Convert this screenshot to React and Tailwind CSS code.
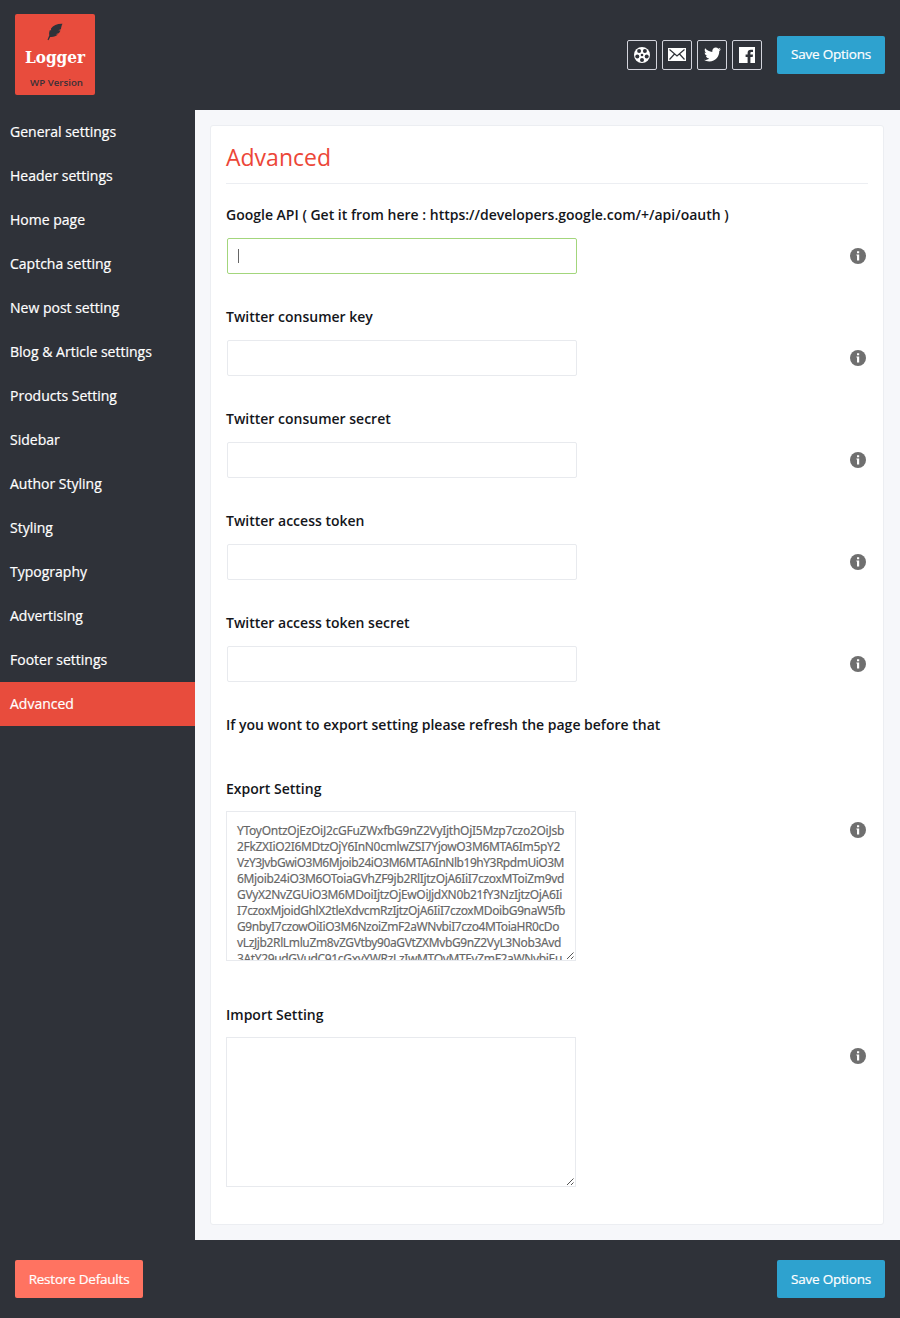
import { useLayoutEffect, useRef, useState } from "react";
import { FaTwitter } from "react-icons/fa";

const nav = ["General settings", "Header settings", "Home page", "Captcha setting", "New post setting", "Blog & Article settings", "Products Setting", "Sidebar", "Author Styling", "Styling", "Typography", "Advertising", "Footer settings", "Advanced"];

const exportLines = [
  ["YToyOntzOjEzOiJ2cGFuZWxfbG9nZ2VyIjthOjI5Mzp7czo2OiJsb", 327],
  ["2FkZXIiO2I6MDtzOjY6InN0cmlwZSI7YjowO3M6MTA6Im5pY2", 323],
  ["VzY3JvbGwiO3M6Mjoib24iO3M6MTA6InNlb19hY3RpdmUiO3M", 327],
  ["6Mjoib24iO3M6OToiaGVhZF9jb2RlIjtzOjA6IiI7czoxMToiZm9vd", 327],
  ["GVyX2NvZGUiO3M6MDoiIjtzOjEwOiJjdXN0b21fY3NzIjtzOjA6Ii", 325],
  ["I7czoxMjoidGhlX2tleXdvcmRzIjtzOjA6IiI7czoxMDoibG9naW5fb", 328],
  ["G9nbyI7czowOiIiO3M6NzoiZmF2aWNvbiI7czo4MToiaHR0cDo", 322],
  ["vLzJjb2RlLmluZm8vZGVtby90aGVtZXMvbG9nZ2VyL3Nob3Avd", 324],
  ["3AtY29udGVudC91cGxvYWRzLzIwMTQvMTEvZmF2aWNvbiEu", 325],
];

// One line of the export code, tracked so that it fills the given width.
function CodeLine({ text, width }) {
  const ref = useRef(null);
  const [spacing, setSpacing] = useState(0);
  useLayoutEffect(() => {
    const el = ref.current;
    el.style.letterSpacing = "0px";
    const next = (width - el.getBoundingClientRect().width) / text.length;
    el.style.letterSpacing = next + "px";
    setSpacing(next);
  }, [text, width]);
  return (
    <div className="h-4 text-[12px] leading-4 font-['Noto_Sans',sans-serif]">
      <span ref={ref} className="inline-block whitespace-pre text-[#666] [-webkit-text-stroke:0.15px_#666]" style={{ letterSpacing: spacing + "px" }}>{text}</span>
    </div>
  );
}

function Info({ className }) {
  return (
    <svg className={"size-4 shrink-0 " + className} viewBox="0 0 16 16">
      <circle cx="8" cy="8" r="8" fill="#6f6f6f" />
      <path d="M7 3.200h2.200v2H7zM6.400 6.400h2.800v6.200H7V7.500h-.6z" fill="#fff" />
    </svg>
  );
}

function Label({ children }) {
  return <div className="text-[14px] leading-5 font-semibold text-[#14161b] whitespace-nowrap">{children}</div>;
}

function Field({ label, active }) {
  return (
    <div className="h-[102px]">
      <Label>{label}</Label>
      <div className="mt-[13px] flex items-center justify-between pl-px">
        <div className={"h-9 w-[350px] rounded-[2px] border bg-white flex items-center pl-2.5 " + (active ? "border-[#a3d67c]" : "border-[#e8eaee]")}>
          {active && <span className="h-[14px] w-px bg-[#666]" />}
        </div>
        <Info className="mr-[2px]" />
      </div>
    </div>
  );
}

function Area({ children }) {
  return (
    <div className="mt-3 flex items-start justify-between">
      <div className="relative h-[150px] w-[350px] overflow-hidden border border-[#e8eaee] pt-[11px] pl-2.5">
        {children}
        <svg className="absolute right-0 bottom-0 size-[9px] bg-white" viewBox="0 0 9 9" stroke="#555" fill="none">
          <path d="M1 8 7.500 1.500M5 8 7.500 5.500" />
        </svg>
      </div>
      <Info className="mt-[11px] mr-[2px]" />
    </div>
  );
}

function Social({ children }) {
  return <div className="flex size-[30px] items-center justify-center rounded-[2px] border border-[#d3d4dc]">{children}</div>;
}

function Button({ children, className }) {
  return <button className={"flex h-[38px] items-center justify-center rounded-[2px] text-[13.5px] tracking-[-0.22px] text-white whitespace-nowrap [-webkit-text-stroke:0.2px_white] " + className}>{children}</button>;
}

export default function App() {
  return (
    <div className="flex h-[1318px] w-[900px] flex-col bg-[#2f3239] font-['Open_Sans',sans-serif]">
      <header className="flex h-[109.5px] shrink-0 items-start justify-between pr-[15px] pl-[15px]">
        <div className="mt-[14px] flex h-[81px] w-20 flex-col items-center rounded-[2px] bg-[#e84c3d]">
          <svg className="mt-[9px] h-[18px] w-4" viewBox="0 0 16 18" fill="#2f3239">
            <path d="M15.500.8C10.500.6 6.200 2.200 4 5.500l.1 2L2.900 7c-.8 2-1 3.600-.6 5.200L.5 16.800l1 .4 1.700-3.300c3.500.2 5.800-.6 7.700-2.300l-2.400-.4 3.300-.9c1-1.100 1.300-2 1.600-2.900l-2.100-.2 2.600-1C14.300 4.300 14.500 2.500 15.500.8z" />
          </svg>
          <div className="mt-[5px] font-['Roboto_Slab','DejaVu_Serif_Condensed','DejaVu_Serif',serif] text-[17px] leading-[22px] font-bold text-white [font-stretch:condensed]">Logger</div>
          <div className="mt-[9px] pl-[3px] text-[9.700px] leading-3 font-semibold whitespace-nowrap text-[#3b3037]">WP Version</div>
        </div>
        <div className="mt-[35.500px] flex items-center">
          <div className="mr-[15px] flex gap-[5px]">
            <Social>
              <svg className="size-4" viewBox="0 0 16 16">
                <circle cx="8" cy="8" r="8" fill="#fff" />
                <circle cx="8" cy="8" r="1.300" fill="#2f3239" />
                <g fill="#2f3239"><circle cx="8" cy="12.900" r="2" /><circle cx="12.700" cy="9.400" r="2" /><circle cx="10.900" cy="3.900" r="2" /><circle cx="5.100" cy="3.900" r="2" /><circle cx="3.300" cy="9.400" r="2" /></g>
              </svg>
            </Social>
            <Social>
              <svg className="h-[13px] w-[18px]" viewBox="0 0 18 13">
                <path d="M0 0h18v13H0z" fill="#fff" />
                <path d="M1.500 1.500 9 8l7.500-6.500M1.500 11.500 6.500 6M16.500 11.500 11.500 6" fill="none" stroke="#2f3239" strokeWidth="1.200" />
              </svg>
            </Social>
            <Social><FaTwitter className="size-[17px] text-white" /></Social>
            <Social>
              <svg className="size-4" viewBox="0 0 16 16">
                <path d="M0 0h16v16H0z" fill="#fff" />
                <path d="M8.600 16v-6H6.600V7.600h2V6c0-2 1.200-3.200 3.200-3.200H14v2.300h-1.400c-.9 0-1.200.4-1.200 1.200v1.300H14L13.700 10h-2.300v6z" fill="#2f3239" />
              </svg>
            </Social>
          </div>
          <Button className="w-[108px] bg-[#2ea2cf]">Save Options</Button>
        </div>
      </header>
      <div className="flex h-[1130.9px] shrink-0">
        <nav className="flex w-[195px] shrink-0 flex-col">
          {nav.map((n) => (
            <div key={n} className={"flex h-11 items-center pb-px pl-2.5 text-[14px] text-white whitespace-nowrap [-webkit-text-stroke:0.2px_white] " + (n === "Advanced" ? "bg-[#e84c3d]" : "")}>{n}</div>
          ))}
        </nav>
        <main className="flex flex-1 bg-[#f6f7fa] pt-[15px] pr-4 pb-[15px] pl-[15px]">
          <section className="flex-1 rounded-[3px] border border-[#eceef2] bg-white px-[15px]">
            <h1 className="mt-[14px] border-b border-[#eceef2] pb-[9px] text-[23px] leading-[34px] text-[#ec4638]">Advanced</h1>
            <div className="mt-[21.700px]">
              <Field label="Google API ( Get it from here : https://developers.google.com/+/api/oauth )" active />
              <Field label="Twitter consumer key" />
              <Field label="Twitter consumer secret" />
              <Field label="Twitter access token" />
              <Field label="Twitter access token secret" />
            </div>
            <Label>If you wont to export setting please refresh the page before that</Label>
            <div className="mt-11 h-[226px]">
              <Label>Export Setting</Label>
              <Area>
                {exportLines.map(([t, w]) => (
                  <CodeLine key={t} text={t} width={w} />
                ))}
              </Area>
            </div>
            <Label>Import Setting</Label>
            <Area />
          </section>
        </main>
      </div>
      <footer className="flex flex-1 items-start justify-between px-[15px] pt-5">
        <Button className="w-32 bg-[#ff7361]">Restore Defaults</Button>
        <Button className="w-[108px] bg-[#2ea2cf]">Save Options</Button>
      </footer>
    </div>
  );
}
